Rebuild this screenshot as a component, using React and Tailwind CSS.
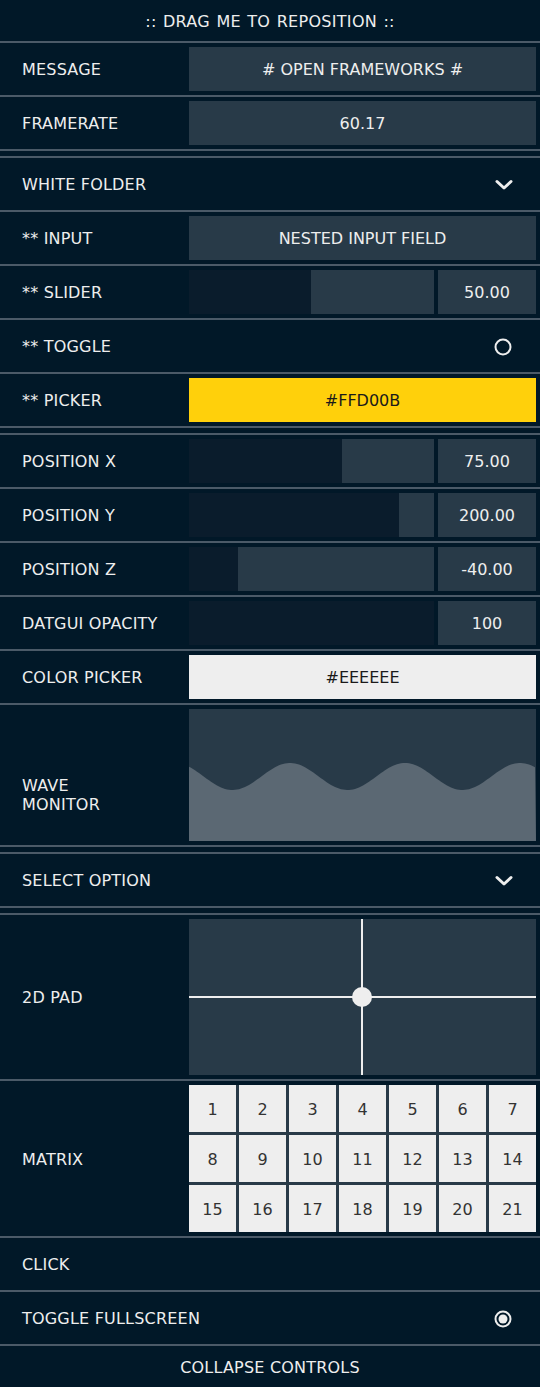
import React from "react";

const FONT = { fontFamily: '"DejaVu Sans", Verdana, sans-serif' };

// wave monitor path, box is 347 x 132
function wavePath() {
  const w = 347;
  const h = 132;
  let d = `M0 ${h}`;
  for (let x = 0; x <= w; x += 2) {
    const y = 67.5 - 13.5 * Math.cos((2 * Math.PI * (x + 14)) / 115);
    d += ` L${x} ${y.toFixed(2)}`;
  }
  d += ` L${w} ${h} Z`;
  return d;
}

function Chevron() {
  return (
    <svg width="18" height="12" viewBox="0 0 18 12" className="block">
      <polyline points="2,2.5 9,9 16,2.5" fill="none" stroke="#eeeeee" strokeWidth="3" strokeLinecap="round" strokeLinejoin="round" />
    </svg>
  );
}

function Row({ label, children, h = "h-[52px]" }) {
  return (
    <div className={`flex items-stretch bg-[#011828] ${h}`}>
      <div className="w-[189px] shrink-0 pl-[22px] pt-[2px] flex items-center text-[16px] text-[#eeeeee] tracking-[0.2px]">{label}</div>
      <div className="flex-1 flex py-[4px] pr-[4px]">{children}</div>
    </div>
  );
}

function Box({ children, className = "bg-[#283a48] text-[#eeeeee]" }) {
  return <div className={`flex-1 flex items-center justify-center pt-[2px] text-[16px] ${className}`}>{children}</div>;
}

function Slider({ label, value, fill }) {
  return (
    <Row label={label}>
      <div className="w-[245px] flex bg-[#283a48]">
        <div className="h-full bg-[#0a1c2c]" style={{ width: fill }} />
      </div>
      <div className="ml-[4px] flex-1 flex items-center justify-center pt-[2px] bg-[#283a48] text-[16px] text-[#eeeeee]">{value}</div>
    </Row>
  );
}

function Break() {
  return <div className="h-[5px] bg-[#011828]" />;
}

export default function App() {
  const nums = Array.from({ length: 21 }, (_, i) => i + 1);
  return (
    <div className="w-[540px] min-h-[1387px] bg-[#011828]" style={FONT}>
      <div className="flex flex-col gap-[2px] bg-[#4b5a68]">
        {/* header */}
        <div className="h-[41px] bg-[#011828] flex items-center justify-center pt-[2px] text-[16px] text-[#eeeeee] [word-spacing:1px] tracking-[0.3px]">
          :: DRAG ME TO REPOSITION ::
        </div>

        <Row label="MESSAGE">
          <Box># OPEN FRAMEWORKS #</Box>
        </Row>
        <Row label="FRAMERATE">
          <Box>60.17</Box>
        </Row>
        <Break />

        {/* folder */}
        <div className="h-[52px] bg-[#011828] flex items-center justify-between pl-[22px] pr-[27px] pt-[2px] text-[16px] text-[#eeeeee] tracking-[0.2px]">
          <span>WHITE FOLDER</span>
          <Chevron />
        </div>
        <Row label="** INPUT">
          <Box>NESTED INPUT FIELD</Box>
        </Row>
        <Slider label="** SLIDER" value="50.00" fill={122} />
        <div className="h-[52px] bg-[#011828] flex items-center justify-between pl-[22px] pr-[27px] pt-[2px] text-[16px] text-[#eeeeee] tracking-[0.2px]">
          <span>** TOGGLE</span>
          <svg width="20" height="20" viewBox="0 0 20 20" className="block">
            <circle cx="10" cy="10" r="7.5" fill="none" stroke="#eeeeee" strokeWidth="2" />
          </svg>
        </div>
        <Row label="** PICKER">
          <Box className="bg-[#ffd00b] text-[#1a1a1a]">#FFD00B</Box>
        </Row>
        <Break />

        <Slider label="POSITION X" value="75.00" fill={153} />
        <Slider label="POSITION Y" value="200.00" fill={210} />
        <Slider label="POSITION Z" value="-40.00" fill={49} />
        <Slider label="DATGUI OPACITY" value="100" fill={245} />
        <Row label="COLOR PICKER">
          <Box className="bg-[#eeeeee] text-[#1a1a1a]">#EEEEEE</Box>
        </Row>

        {/* wave monitor */}
        <div className="h-[140px] bg-[#011828] flex">
          <div className="w-[189px] shrink-0 pl-[22px] pt-[71px] text-[16px] leading-[19px] text-[#eeeeee] tracking-[0.2px]">
            WAVE
            <br />
            MONITOR
          </div>
          <div className="flex-1 py-[4px] pr-[4px] flex">
            <div className="flex-1 bg-[#283a48]">
              <svg width="100%" height="100%" viewBox="0 0 347 132" preserveAspectRatio="none" className="block">
                <path d={wavePath()} fill="#5b6873" />
              </svg>
            </div>
          </div>
        </div>
        <Break />

        <div className="h-[52px] bg-[#011828] flex items-center justify-between pl-[22px] pr-[27px] pt-[2px] text-[16px] text-[#eeeeee] tracking-[0.2px]">
          <span>SELECT OPTION</span>
          <Chevron />
        </div>
        <Break />

        {/* 2d pad */}
        <Row label="2D PAD" h="h-[164px]">
          <div className="flex-1 bg-[#283a48] relative">
            <div className="absolute left-0 right-0 top-[77px] h-[2px] bg-[#eeeeee]" />
            <div className="absolute top-0 bottom-0 left-[172px] w-[2px] bg-[#eeeeee]" />
            <div className="absolute left-[163px] top-[68px] w-[20px] h-[20px] rounded-full bg-[#eeeeee]" />
          </div>
        </Row>

        {/* matrix */}
        <Row label="MATRIX" h="h-[155px]">
          <div className="flex-1 grid grid-cols-7 grid-rows-3 gap-[3px] bg-[#283a48]">
            {nums.map((n) => (
              <div key={n} className="bg-[#eeeeee] flex items-center justify-center pt-[2px] text-[16px] text-[#333333]">
                {n}
              </div>
            ))}
          </div>
        </Row>

        <div className="h-[52px] bg-[#011828] flex items-center pl-[22px] pt-[2px] text-[16px] text-[#eeeeee] tracking-[0.2px]">CLICK</div>
        <div className="h-[52px] bg-[#011828] flex items-center justify-between pl-[22px] pr-[27px] pt-[2px] text-[16px] text-[#eeeeee] tracking-[0.2px]">
          <span>TOGGLE FULLSCREEN</span>
          <svg width="20" height="20" viewBox="0 0 20 20" className="block">
            <circle cx="10" cy="10" r="7.5" fill="none" stroke="#eeeeee" strokeWidth="2" />
            <circle cx="10" cy="10" r="4.5" fill="#eeeeee" />
          </svg>
        </div>
        <div className="h-[41px] bg-[#011828] flex items-center justify-center pt-[2px] text-[16px] text-[#eeeeee] tracking-[0.2px]">
          COLLAPSE CONTROLS
        </div>
      </div>
    </div>
  );
}
